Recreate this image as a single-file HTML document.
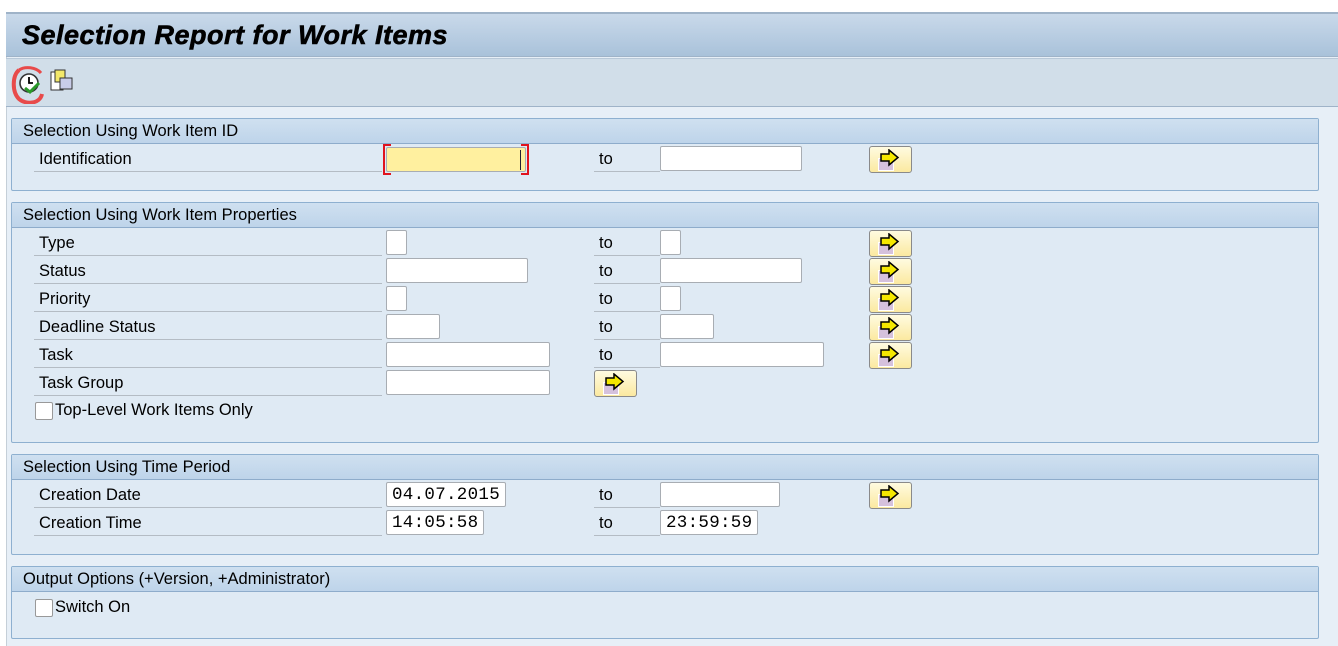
<!DOCTYPE html>
<html><head><meta charset="utf-8"><style>
*{margin:0;padding:0;box-sizing:border-box}
body{width:1338px;height:646px;overflow:hidden;background:#fff;font-family:"Liberation Sans",Tahoma,sans-serif;font-size:16.5px;color:#000;position:relative}
.abs{position:absolute}
#main{position:absolute;left:6px;top:12px;right:0;bottom:0;background:#e7eff7;border-left:1px solid #c5cfd8}
#title{position:absolute;left:6px;top:12px;right:0;height:45px;background:linear-gradient(#c9d9ea,#a9c2da);border-top:2px solid #9fb3c8;border-bottom:1px solid #9fb3c8}
#title span{position:absolute;left:16px;top:6px;font-size:27px;font-weight:bold;font-style:italic;color:#000;letter-spacing:0.5px;-webkit-text-stroke:0.6px #000}
#tb{position:absolute;left:6px;top:58px;right:0;height:49px;background:#d1dee9;border-bottom:1px solid #9fb3c8;border-top:1px solid #b8c8d8}
.panel{position:absolute;left:11px;width:1308px;background:#dfeaf4;border:1px solid #8eb0d0;border-radius:2px}
.ph{height:25px;background:linear-gradient(#cfe0f0,#bed4ea);border-bottom:1px solid #8eaccb;padding:3px 0 0 11px;color:#000}
.lbl{position:absolute;left:22px;width:348px;height:26px;border-bottom:1px solid #b4bcc4;padding:4px 0 0 5px}
.to{position:absolute;left:582px;width:66px;height:26px;border-bottom:1px solid #b4bcc4;padding:4px 0 0 5px}
.in{position:absolute;height:25px;background:#fff;border:1px solid #a8adb3;border-radius:2px;font-family:"Liberation Mono",monospace;font-size:17.5px;padding:2px 0 0 5px;letter-spacing:0.3px}
.btn{position:absolute;width:43px;height:27px;border:1px solid #8a8a8a;border-radius:3px;background:linear-gradient(#fffbe0,#fbe9a0)}
.btn i{position:absolute;left:8px;top:11px;width:16px;height:13px;background:#d5c1dc;border:1px solid #fff}
.btn svg{position:absolute;left:9px;top:2px}
.cb{position:absolute;left:23px;width:18px;height:18px;background:#fff;border:1px solid #999;border-radius:2px}
</style></head><body>
<div id="main"></div>
<div id="title"><span>Selection Report for Work Items</span></div>
<div id="tb">
<svg class="abs" style="left:4px;top:5px" width="40" height="40" viewBox="0 0 40 40">
<path d="M9 6 C2 12 2 28 9 35 C16 41 30 40 32 30" stroke="#e84a4a" stroke-width="4" fill="none"/>
<path d="M9 6 C15 2 26 3 31 9" stroke="#e84a4a" stroke-width="3" fill="none"/>
<circle cx="19" cy="19" r="9" fill="#fff" stroke="#333" stroke-width="1.6"/>
<path d="M19 13 V19 H23" stroke="#000" stroke-width="1.8" fill="none"/>
<path d="M15 24 L20 28 L29 19" stroke="#2a9a2a" stroke-width="3" fill="none"/>
</svg>
<svg class="abs" style="left:44px;top:10px" width="26" height="26" viewBox="0 0 26 26">
<rect x="1" y="3" width="12" height="18" fill="#fff" stroke="#333"/>
<rect x="5" y="1" width="10" height="12" fill="#f3e86a" stroke="#333"/>
<rect x="10" y="9" width="12" height="11" fill="#c8cce8" stroke="#333"/>
</svg>
</div>

<div class="panel" style="top:118px;height:73px">
<div class="ph">Selection Using Work Item ID</div>
<div class="lbl" style="top:27px">Identification</div>
<div class="in" style="left:374px;top:28px;width:140px;background:#fff09f"></div>
<div class="abs" style="left:371px;top:25px;width:146px;height:31px;border:2px solid #e0141e;clip-path:polygon(0 0,8px 0,8px 4px,4px 4px,4px 100%,0 100%,0 0,100% 0,100% 100%,0 100%,0 calc(100% - 4px),8px calc(100% - 4px),8px 100%,calc(100% - 8px) 100%,calc(100% - 8px) calc(100% - 4px),calc(100% - 4px) calc(100% - 4px),calc(100% - 4px) 4px,calc(100% - 8px) 4px,calc(100% - 8px) 0)"></div>
<div class="abs" style="left:508px;top:31px;width:1px;height:20px;background:#223"></div>
<div class="to" style="top:27px">to</div>
<div class="in" style="left:648px;top:27px;width:142px"></div>
<div class="btn" style="left:857px;top:27px"><i></i><svg width="24" height="18" viewBox="0 0 24 18"><path d="M2 5 H10 V1 L19 8.5 L10 16 V12 H2 Z" fill="#f5e800" stroke="#000" stroke-width="1.5"/></svg></div>
</div>

<div class="panel" style="top:202px;height:241px">
<div class="ph">Selection Using Work Item Properties</div>
<div class="lbl" style="top:27px">Type</div>
<div class="in" style="left:374px;top:27px;width:21px"></div>
<div class="to" style="top:27px">to</div>
<div class="in" style="left:648px;top:27px;width:21px"></div>
<div class="btn" style="left:857px;top:27px"><i></i><svg width="24" height="18" viewBox="0 0 24 18"><path d="M2 5 H10 V1 L19 8.5 L10 16 V12 H2 Z" fill="#f5e800" stroke="#000" stroke-width="1.5"/></svg></div>

<div class="lbl" style="top:55px">Status</div>
<div class="in" style="left:374px;top:55px;width:142px"></div>
<div class="to" style="top:55px">to</div>
<div class="in" style="left:648px;top:55px;width:142px"></div>
<div class="btn" style="left:857px;top:55px"><i></i><svg width="24" height="18" viewBox="0 0 24 18"><path d="M2 5 H10 V1 L19 8.5 L10 16 V12 H2 Z" fill="#f5e800" stroke="#000" stroke-width="1.5"/></svg></div>

<div class="lbl" style="top:83px">Priority</div>
<div class="in" style="left:374px;top:83px;width:21px"></div>
<div class="to" style="top:83px">to</div>
<div class="in" style="left:648px;top:83px;width:21px"></div>
<div class="btn" style="left:857px;top:83px"><i></i><svg width="24" height="18" viewBox="0 0 24 18"><path d="M2 5 H10 V1 L19 8.5 L10 16 V12 H2 Z" fill="#f5e800" stroke="#000" stroke-width="1.5"/></svg></div>

<div class="lbl" style="top:111px">Deadline Status</div>
<div class="in" style="left:374px;top:111px;width:54px"></div>
<div class="to" style="top:111px">to</div>
<div class="in" style="left:648px;top:111px;width:54px"></div>
<div class="btn" style="left:857px;top:111px"><i></i><svg width="24" height="18" viewBox="0 0 24 18"><path d="M2 5 H10 V1 L19 8.5 L10 16 V12 H2 Z" fill="#f5e800" stroke="#000" stroke-width="1.5"/></svg></div>

<div class="lbl" style="top:139px">Task</div>
<div class="in" style="left:374px;top:139px;width:164px"></div>
<div class="to" style="top:139px">to</div>
<div class="in" style="left:648px;top:139px;width:164px"></div>
<div class="btn" style="left:857px;top:139px"><i></i><svg width="24" height="18" viewBox="0 0 24 18"><path d="M2 5 H10 V1 L19 8.5 L10 16 V12 H2 Z" fill="#f5e800" stroke="#000" stroke-width="1.5"/></svg></div>

<div class="lbl" style="top:167px">Task Group</div>
<div class="in" style="left:374px;top:167px;width:164px"></div>
<div class="btn" style="left:582px;top:167px"><i></i><svg width="24" height="18" viewBox="0 0 24 18"><path d="M2 5 H10 V1 L19 8.5 L10 16 V12 H2 Z" fill="#f5e800" stroke="#000" stroke-width="1.5"/></svg></div>

<div class="cb" style="top:199px"></div>
<div class="abs" style="left:43px;top:198px">Top-Level Work Items Only</div>
</div>

<div class="panel" style="top:454px;height:101px">
<div class="ph">Selection Using Time Period</div>
<div class="lbl" style="top:27px">Creation Date</div>
<div class="in" style="left:374px;top:27px;width:120px">04.07.2015</div>
<div class="to" style="top:27px">to</div>
<div class="in" style="left:648px;top:27px;width:120px"></div>
<div class="btn" style="left:857px;top:27px"><i></i><svg width="24" height="18" viewBox="0 0 24 18"><path d="M2 5 H10 V1 L19 8.5 L10 16 V12 H2 Z" fill="#f5e800" stroke="#000" stroke-width="1.5"/></svg></div>
<div class="lbl" style="top:55px">Creation Time</div>
<div class="in" style="left:374px;top:55px;width:98px">14:05:58</div>
<div class="to" style="top:55px">to</div>
<div class="in" style="left:648px;top:55px;width:98px">23:59:59</div>
</div>

<div class="panel" style="top:566px;height:73px">
<div class="ph">Output Options (+Version, +Administrator)</div>
<div class="cb" style="top:32px"></div>
<div class="abs" style="left:43px;top:31px">Switch On</div>
</div>
</body></html>
